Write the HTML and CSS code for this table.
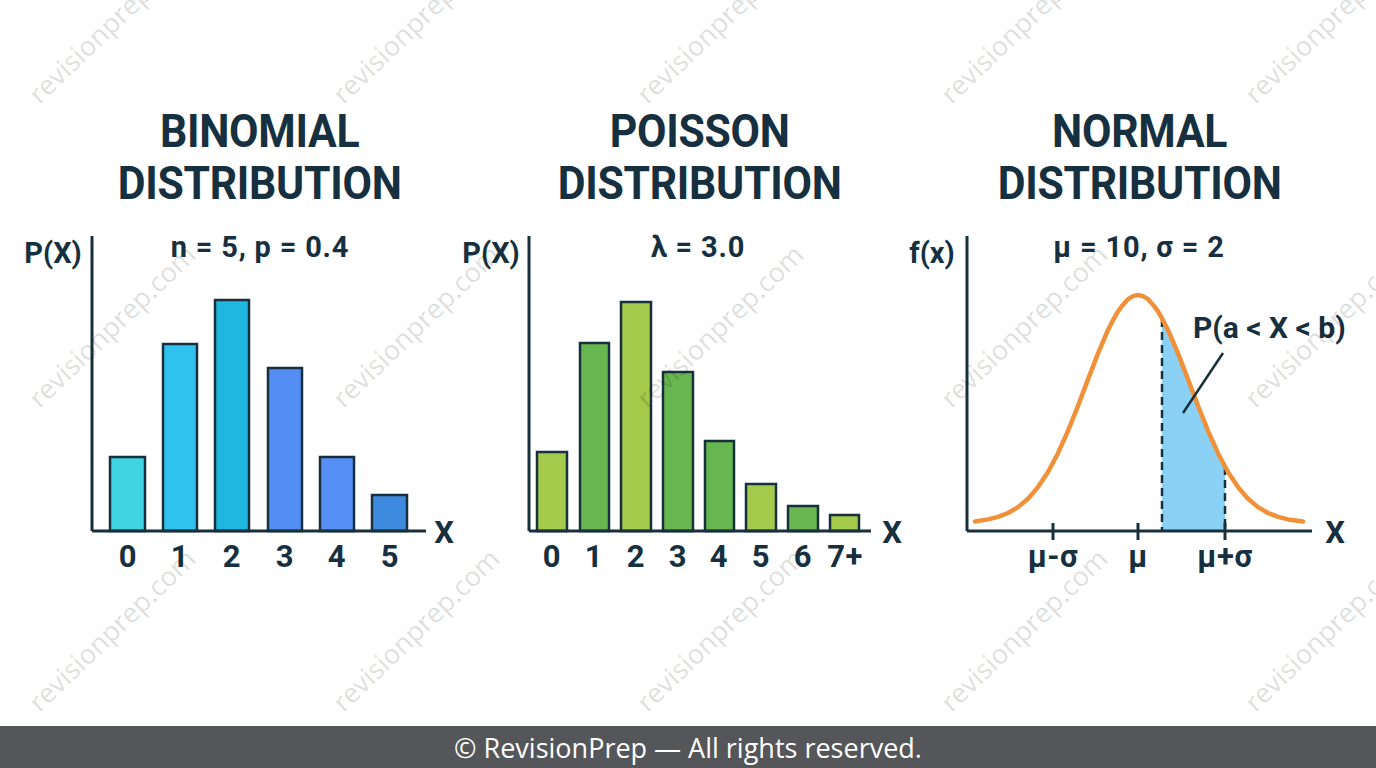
FILE: index.html
```html
<!DOCTYPE html>
<html lang="en">
<head>
<meta charset="utf-8">
<title>Probability Distributions</title>
<link rel="stylesheet" href="styles.css">
</head>
<body>
<main class="board">
  <section class="panel">
    <h2 class="title">BINOMIAL<br>DISTRIBUTION</h2>
    <svg class="chart" width="440" height="380" viewBox="0 0 440 380">
      <text class="param" x="220" y="37">n = 5, p = 0.4</text>
      <text class="ylab" x="13" y="43">P(X)</text>
      <rect class="bar" x="70" y="237" width="35" height="74" fill="#40d3e1"/>
      <rect class="bar" x="123" y="124" width="34" height="187" fill="#2fc2ee"/>
      <rect class="bar" x="175" y="80" width="34" height="231" fill="#1fb6df"/>
      <rect class="bar" x="228" y="148" width="34" height="163" fill="#548ef5"/>
      <rect class="bar" x="280" y="237" width="34" height="74" fill="#5690f7"/>
      <rect class="bar" x="332" y="275" width="35" height="36" fill="#3e8adf"/>
      <line class="axis" x1="52" y1="16" x2="52" y2="311"/>
      <line class="axis" x1="52" y1="311" x2="386" y2="311"/>
      <text class="xlab" x="404" y="323">X</text>
      <text class="tick" x="88" y="347">0</text>
      <text class="tick" x="140" y="347">1</text>
      <text class="tick" x="192" y="347">2</text>
      <text class="tick" x="245" y="347">3</text>
      <text class="tick" x="297" y="347">4</text>
      <text class="tick" x="350" y="347">5</text>
    </svg>
  </section>
  <section class="panel">
    <h2 class="title">POISSON<br>DISTRIBUTION</h2>
    <svg class="chart" width="440" height="380" viewBox="0 0 440 380">
      <text class="param" x="218" y="37">λ = 3.0</text>
      <text class="ylab" x="11" y="43">P(X)</text>
      <rect class="bar" x="57" y="232" width="30" height="79" fill="#a4c94b"/>
      <rect class="bar" x="100" y="123" width="29" height="188" fill="#68b650"/>
      <rect class="bar" x="141" y="82" width="30" height="229" fill="#a4c94b"/>
      <rect class="bar" x="183" y="152" width="30" height="159" fill="#68b650"/>
      <rect class="bar" x="225" y="221" width="29" height="90" fill="#68b650"/>
      <rect class="bar" x="266" y="264" width="30" height="47" fill="#a4c94b"/>
      <rect class="bar" x="308" y="286" width="30" height="25" fill="#68b650"/>
      <rect class="bar" x="350" y="295" width="29" height="16" fill="#a4c94b"/>
      <line class="axis" x1="49" y1="16" x2="49" y2="311"/>
      <line class="axis" x1="49" y1="311" x2="391" y2="311"/>
      <text class="xlab" x="412" y="323">X</text>
      <text class="tick" x="72" y="347">0</text>
      <text class="tick" x="114" y="347">1</text>
      <text class="tick" x="156" y="347">2</text>
      <text class="tick" x="198" y="347">3</text>
      <text class="tick" x="239" y="347">4</text>
      <text class="tick" x="281" y="347">5</text>
      <text class="tick" x="323" y="347">6</text>
      <text class="tick" x="365" y="347">7+</text>
    </svg>
  </section>
  <section class="panel">
    <h2 class="title">NORMAL<br>DISTRIBUTION</h2>
    <svg class="chart" width="440" height="380" viewBox="0 0 440 380">
      <text class="param" x="219" y="37">μ = 10, σ = 2</text>
      <text class="ylab" x="12" y="43">f(x)</text>
      <polygon class="area" points="242,311 242,98 248,110 258,133.4 268,159.4 278,185.8 288,210.9 298,233.2 305,246.8 305,311"/>
      <line class="dash" x1="242" y1="99" x2="242" y2="311"/>
      <line class="dash" x1="305" y1="247" x2="305" y2="311"/>
      <polyline class="curve" points="55,301.5 68,299.4 78,296.9 88,293 98,287.1 108,278.7 118,267.1 128,252 138,233.2 148,210.9 158,185.8 168,159.4 178,133.4 188,110 193,100.2 198,91.3 203,84.7 208,79.2 213,76.1 218,75 223,76.1 228,79.2 233,84.7 238,91.3 243,100.2 248,110 258,133.4 268,159.4 278,185.8 288,210.9 298,233.2 308,252 318,267.1 328,278.7 338,287.1 348,293 358,296.9 368,299.4 383,301.5"/>
      <line class="axis" x1="47" y1="16" x2="47" y2="311"/>
      <line class="axis" x1="47" y1="311" x2="392" y2="311"/>
      <line class="mark" x1="133" y1="303" x2="133" y2="320"/>
      <line class="mark" x1="218" y1="303" x2="218" y2="320"/>
      <line class="mark" x1="305" y1="303" x2="305" y2="320"/>
      <line class="pointer" x1="303" y1="133" x2="263" y2="193"/>
      <text class="note" x="273" y="118">P(a &lt; X &lt; b)</text>
      <text class="xlab" x="415" y="323">X</text>
      <text class="tick" x="133" y="347">μ-σ</text>
      <text class="tick" x="218" y="347">μ</text>
      <text class="tick" x="305" y="347">μ+σ</text>
    </svg>
  </section>
  <div class="watermarks" aria-hidden="true">
    <span class="wm"><span>revisionprep.com</span></span>
    <span class="wm"><span>revisionprep.com</span></span>
    <span class="wm"><span>revisionprep.com</span></span>
    <span class="wm"><span>revisionprep.com</span></span>
    <span class="wm"><span>revisionprep.com</span></span>
    <span class="wm"><span>revisionprep.com</span></span>
    <span class="wm"><span>revisionprep.com</span></span>
    <span class="wm"><span>revisionprep.com</span></span>
    <span class="wm"><span>revisionprep.com</span></span>
    <span class="wm"><span>revisionprep.com</span></span>
    <span class="wm"><span>revisionprep.com</span></span>
    <span class="wm"><span>revisionprep.com</span></span>
    <span class="wm"><span>revisionprep.com</span></span>
    <span class="wm"><span>revisionprep.com</span></span>
    <span class="wm"><span>revisionprep.com</span></span>
  </div>
</main>
<footer class="footer">© RevisionPrep — All rights reserved.</footer>
</body>
</html>
```

FILE: styles.css
```css
* { box-sizing: border-box; }

html, body {
  margin: 0;
  padding: 0;
  background: #ffffff;
}

body {
  width: 1376px;
  height: 768px;
  overflow: hidden;
  font-family: Roboto, "Liberation Sans", sans-serif;
  color: #17303f;
}

.board {
  position: relative;
  height: 726px;
  overflow: hidden;
  display: grid;
  grid-template-columns: repeat(3, 440px);
  padding: 105px 0 0 40px;
}

.panel {
  display: flex;
  flex-direction: column;
  align-items: center;
}

.title {
  margin: 0;
  font-family: Roboto, "Liberation Sans", sans-serif;
  font-weight: 700;
  font-size: 46px;
  line-height: 52px;
  letter-spacing: -0.3px;
  text-align: center;
  color: #17303f;
  transform: scaleX(0.93);
}

.chart {
  display: block;
  margin-top: 11px;
  overflow: visible;
  font-family: Roboto, "Liberation Sans", sans-serif;
  font-weight: 700;
}

.chart text {
  fill: #17303f;
  text-anchor: middle;
}

.param { font-size: 29px; letter-spacing: 0.8px; }
.ylab { font-size: 29px; }
.xlab { font-size: 31px; }
.tick { font-size: 31px; letter-spacing: 0.5px; }
.chart .note { font-size: 30px; text-anchor: start; }

.bar {
  stroke: #17303c;
  stroke-width: 2.5;
}

.axis {
  stroke: #17303c;
  stroke-width: 3;
}

.mark {
  stroke: #17303c;
  stroke-width: 3;
}

.dash {
  stroke: #17303c;
  stroke-width: 2.5;
  stroke-dasharray: 8 5;
}

.pointer {
  stroke: #17303c;
  stroke-width: 2.5;
}

.area {
  fill: #8bd1f6;
}

.curve {
  fill: none;
  stroke: #f0913a;
  stroke-width: 4.5;
  stroke-linecap: round;
  stroke-linejoin: round;
}

.watermarks {
  position: absolute;
  left: 38px;
  top: -201px;
  display: grid;
  grid-template-columns: repeat(5, 304px);
  grid-template-rows: repeat(3, 304px);
  pointer-events: none;
}

.wm {
  display: flex;
  align-items: flex-end;
}

.wm span {
  display: block;
  font-family: "Open Sans", "Liberation Sans", sans-serif;
  font-size: 27px;
  line-height: 27px;
  white-space: nowrap;
  color: rgba(0, 0, 0, 0.15);
  transform-origin: 0 80%;
  transform: translateY(6px) rotate(-44deg);
}

.footer {
  height: 42px;
  background: #55565a;
  color: #ffffff;
  display: flex;
  align-items: center;
  justify-content: center;
  font-family: "Open Sans", "Liberation Sans", sans-serif;
  font-size: 27px;
}
```
